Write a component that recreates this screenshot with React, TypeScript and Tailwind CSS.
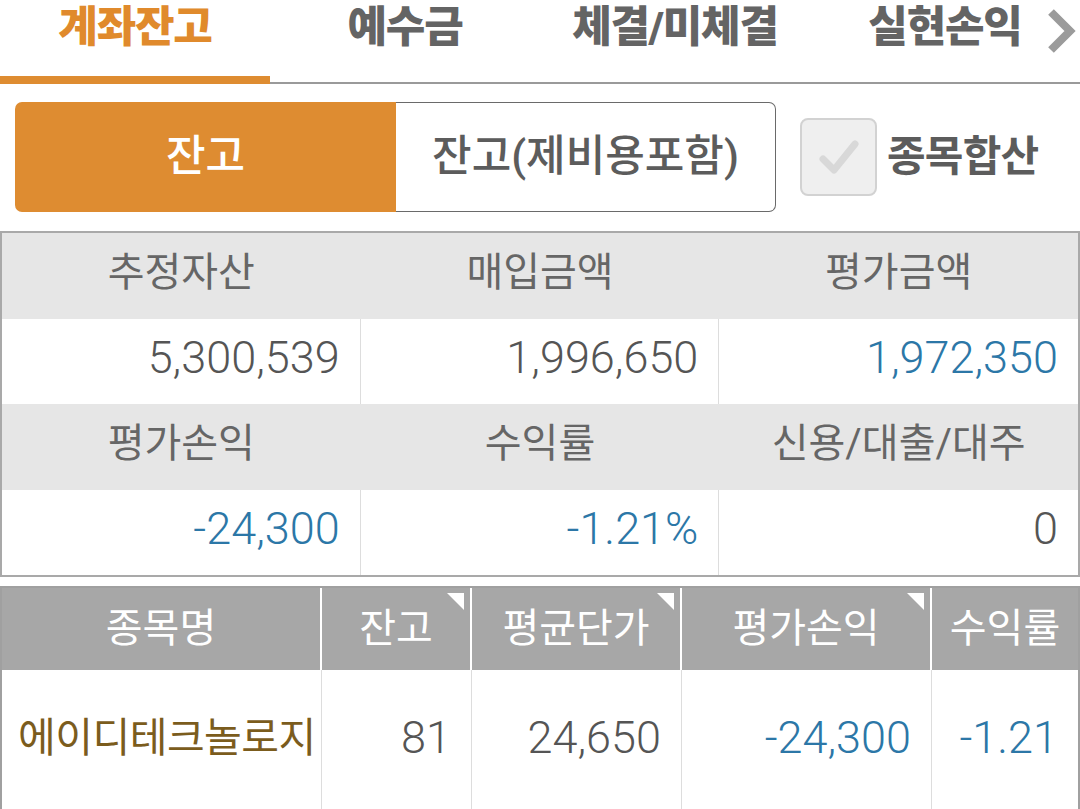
import React from "react";

const FONT = { fontFamily: "Roboto, 'Noto Sans CJK KR', 'Noto Sans', sans-serif" };

function Tabs() {
  const tabs = ["계좌잔고", "예수금", "체결/미체결", "실현손익"];
  return (
    <div className="relative flex w-full">
      {tabs.map((t, i) => (
        <div key={t} className="flex flex-1 flex-col">
          <div
            className={
              "flex h-[76px] items-center justify-center pb-[22px] text-[43px] font-black tracking-[-1.2px] " +
              (i === 0 ? "text-[#e08a2c]" : "text-[#646464]")
            }
          >
            {t}
          </div>
          {i === 0 ? (
            <div className="h-[8px] bg-[#de8c31]" />
          ) : (
            <div className="h-[8px] border-b-2 border-[#9a9a9a]" />
          )}
        </div>
      ))}
      <svg
        className="absolute right-[4px] top-[8px]"
        width="30"
        height="46"
        viewBox="0 0 30 46"
      >
        <polyline
          points="5,4 24,23 5,42"
          fill="none"
          stroke="#9b9b9b"
          strokeWidth="8"
          strokeLinejoin="miter"
        />
      </svg>
    </div>
  );
}

function Segment() {
  return (
    <div className="mt-[18px] flex items-center pl-[15px]">
      <div className="flex h-[110px] w-[761px]">
        <div className="flex w-[381px] items-center justify-center rounded-l-[7px] bg-[#de8c31] pb-[2px] text-[43px] font-medium text-white">
          잔고
        </div>
        <div className="flex flex-1 items-center justify-center rounded-r-[7px] border border-l-0 border-[#6a6a6a] bg-white pb-[2px] text-[43px] font-medium text-[#5c5c5c]">
          잔고(제비용포함)
        </div>
      </div>
      <div className="ml-[24px] flex h-[78px] w-[77px] items-center justify-center rounded-[8px] border-2 border-[#d2d2d2] bg-[#efefef]">
        <svg width="44" height="40" viewBox="0 0 44 40">
          <polyline
            points="6,22 17,33 38,7"
            fill="none"
            stroke="#d8d8d8"
            strokeWidth="7"
            strokeLinecap="round"
            strokeLinejoin="round"
          />
        </svg>
      </div>
      <div className="ml-[10px] pb-[2px] text-[42px] font-bold tracking-[-0.8px] text-[#5c5c5c]">종목합산</div>
    </div>
  );
}

function Summary() {
  const rows: { labels: string[]; values: { v: string; blue?: boolean }[] }[] = [
    {
      labels: ["추정자산", "매입금액", "평가금액"],
      values: [{ v: "5,300,539" }, { v: "1,996,650" }, { v: "1,972,350", blue: true }],
    },
    {
      labels: ["평가손익", "수익률", "신용/대출/대주"],
      values: [{ v: "-24,300", blue: true }, { v: "-1.21%", blue: true }, { v: "0" }],
    },
  ];
  return (
    <div className="mt-[19px] border-2 border-[#a9a9a9]">
      {rows.map((r, ri) => (
        <div key={ri}>
          <div className="grid h-[86px] grid-cols-3 bg-[#e6e6e6]">
            {r.labels.map((l) => (
              <div key={l} className="flex items-center justify-center pb-[6px] text-[40px] text-[#666666]">
                {l}
              </div>
            ))}
          </div>
          <div className="grid h-[85px] grid-cols-3 bg-white">
            {r.values.map((v, i) => (
              <div
                key={i}
                className={
                  "flex items-center justify-end pb-[7px] pr-[20px] text-[45px] font-light " +
                  (i < 2 ? "border-r border-[#dddddd] " : "") +
                  (v.blue ? "text-[#2c77a7]" : "text-[#555555]")
                }
              >
                {v.v}
              </div>
            ))}
          </div>
        </div>
      ))}
    </div>
  );
}

function Corner() {
  return (
    <svg className="absolute right-[6px] top-[5px]" width="17" height="17" viewBox="0 0 17 17">
      <polygon points="0,0 17,0 17,17" fill="#ffffff" />
    </svg>
  );
}

function Holdings() {
  const cols = [
    { h: "종목명", w: "w-[320px]", corner: false },
    { h: "잔고", w: "w-[150px]", corner: true },
    { h: "평균단가", w: "w-[210px]", corner: true },
    { h: "평가손익", w: "w-[250px]", corner: true },
    { h: "수익률", w: "flex-1", corner: false },
  ];
  const vals = [
    { v: "81", c: "text-[#555555]" },
    { v: "24,650", c: "text-[#555555]" },
    { v: "-24,300", c: "text-[#2c77a7]" },
    { v: "-1.21", c: "text-[#2c77a7]" },
  ];
  return (
    <div className="mt-[9px] border-x-2 border-t-2 border-[#a0a0a0]">
      <div className="flex h-[82px] bg-[#a7a7a7]">
        {cols.map((c, i) => (
          <div
            key={c.h}
            className={
              "relative flex items-center justify-center text-[40px] text-white " +
              c.w +
              (i < 4 ? " border-r-2 border-white" : "")
            }
          >
            {c.h}
            {c.corner && <Corner />}
          </div>
        ))}
      </div>
      <div className="flex h-[150px] bg-white">
        <div className="flex w-[320px] items-center border-r border-[#dddddd] pb-[12px] pl-[16px] text-[41px] tracking-[-0.5px] text-[#7b5c1d]">
          에이디테크놀로지
        </div>
        {vals.map((v, i) => (
          <div
            key={i}
            className={
              "flex items-center justify-end pb-[14px] pr-[20px] text-[45px] font-light " +
              cols[i + 1].w +
              " " +
              v.c +
              (i < 3 ? " border-r border-[#dddddd]" : "")
            }
          >
            {v.v}
          </div>
        ))}
      </div>
    </div>
  );
}

export default function App() {
  return (
    <div className="h-[809px] w-[1080px] overflow-hidden bg-white" style={FONT}>
      <Tabs />
      <Segment />
      <Summary />
      <Holdings />
    </div>
  );
}
